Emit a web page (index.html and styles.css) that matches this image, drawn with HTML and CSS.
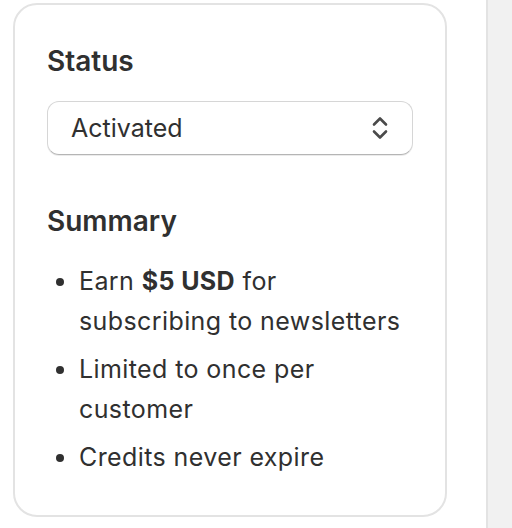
FILE: index.html
```html
<!DOCTYPE html>
<html lang="en">
<head>
    <meta charset="UTF-8">
    <meta name="viewport" content="width=device-width, initial-scale=1.0">
    <title>Reward status</title>
    <link rel="stylesheet" href="styles.css">
</head>
<body>

<div class="layout">
    <div class="main">
        <!-- Status card -->
        <div class="card">
            <h2 class="card-title">Status</h2>
            <div class="select">
                <span class="select-value">Activated</span>
                <svg class="select-icon" width="20" height="28" viewBox="0 0 20 28" fill="none" stroke="#4a4a4a" stroke-width="2.6" stroke-linecap="round" stroke-linejoin="round">
                    <path d="M4 10.5 L10 4.5 L16 10.5"/>
                    <path d="M4 17.5 L10 23.5 L16 17.5"/>
                </svg>
            </div>

            <h2 class="card-title summary-title">Summary</h2>
            <ul class="summary-list">
                <li>Earn <strong>$5 USD</strong> for subscribing to newsletters</li>
                <li>Limited to once per customer</li>
                <li>Credits never expire</li>
            </ul>
        </div>
    </div>
    <div class="side"></div>
</div>

</body>
</html>
```

FILE: styles.css
```css
body {
    margin: 0;
    font-family: 'Inter', 'Noto Sans', sans-serif;
    color: #303030;
    background-color: #fff;
}

.layout {
    display: flex;
    height: 528px;
}

.main {
    width: 486px;
    padding: 3px 0 0 13px;
    box-sizing: border-box;
}

.side {
    flex: 1;
    background-color: #f1f1f1;
    border-left: 2px solid #e3e3e3;
}

.card {
    width: 434px;
    box-sizing: border-box;
    padding: 38px 32px 38px 32px;
    border: 2px solid #e3e3e3;
    border-radius: 24px;
    background-color: #fff;
}

.card-title {
    margin: 0;
    font-size: 28px;
    font-weight: 600;
    line-height: 36px;
}

.summary-title {
    margin-top: 48px;
}

.select {
    display: flex;
    align-items: center;
    justify-content: space-between;
    height: 54px;
    margin-top: 22px;
    padding: 0 22px 0 23px;
    box-sizing: border-box;
    border: 1px solid #d6d6d6;
    border-bottom-color: #b5b5b5;
    border-radius: 12px;
    box-shadow: 0 1px 0 rgba(0, 0, 0, 0.08);
}

.select-value {
    font-size: 25px;
}

.summary-list {
    margin: 22px 0 0 0;
    padding-left: 32px;
    font-size: 25px;
    line-height: 40px;
    letter-spacing: 0.4px;
}

.summary-list li {
    margin-bottom: 8px;
}

.summary-list li:last-child {
    margin-bottom: 0;
}

.summary-list strong {
    font-weight: 700;
}
```
